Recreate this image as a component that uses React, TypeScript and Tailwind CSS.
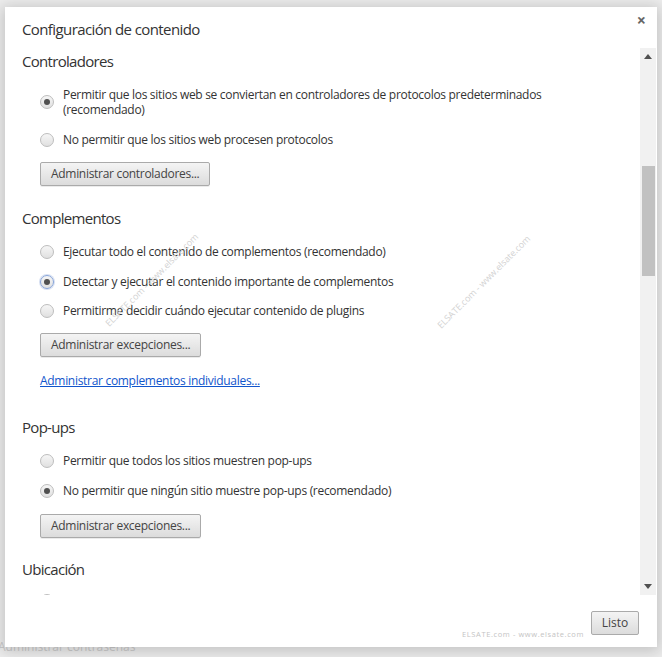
import React from "react";

const font = { fontFamily: '"Open Sans", "Noto Sans", sans-serif' };

function Radio({ checked, focused }: { checked?: boolean; focused?: boolean }) {
  return (
    <span
      className={
        "relative flex h-[14px] w-[14px] shrink-0 items-center justify-center rounded-full border bg-gradient-to-b from-[#f6f6f6] to-[#e0e0e0] " +
        (focused ? "border-[#86a3d8] shadow-[0_0_0_1px_rgba(120,150,210,0.3)]" : "border-[#bdbdbd]")
      }
    >
      {checked && <span className="h-[6px] w-[6px] rounded-full bg-[#505050]" />}
    </span>
  );
}

function Option({
  children,
  checked,
  focused,
  className,
}: {
  children: React.ReactNode;
  checked?: boolean;
  focused?: boolean;
  className?: string;
}) {
  return (
    <div
      className={
        "flex h-[18px] items-center gap-[9px] pl-[18px] text-[12px] leading-[18px] tracking-[-0.3px] text-[#333] " +
        (className ?? "")
      }
    >
      <Radio checked={checked} focused={focused} />
      <span>{children}</span>
    </div>
  );
}

function Btn({ children, className }: { children: React.ReactNode; className?: string }) {
  return (
    <div className={"flex pl-[18px] " + (className ?? "")}>
      <button className="h-[24px] rounded-[2px] border border-[#aaaaaa] bg-gradient-to-b from-[#f4f4f4] to-[#dcdcdc] px-[10px] text-[12px] leading-[22px] tracking-[-0.3px] text-[#444] shadow-[0_1px_0_rgba(0,0,0,0.08)]">
        {children}
      </button>
    </div>
  );
}

function Heading({ children, className }: { children: React.ReactNode; className?: string }) {
  return (
    <h3 className={"h-[20px] text-[15px] leading-[20px] tracking-[-0.7px] text-[#333] " + (className ?? "")}>
      {children}
    </h3>
  );
}

export default function App() {
  return (
    <div className="relative h-[657px] w-[662px] overflow-hidden bg-[#eeeeee]" style={font}>
      {/* settings page behind the overlay */}
      <div className="flex h-full flex-col justify-end pb-[1px] text-[12px] text-[#cbcbcb]">
        <span className="-ml-[2px]">Administrar contraseñas</span>
      </div>

      <div className="absolute left-[5px] top-[7px] flex h-[640px] w-[652px] flex-col bg-white shadow-[0_2px_14px_3px_rgba(0,0,0,0.18)]">
        <div className="flex h-[41px] shrink-0 items-start justify-between pl-[17px] pr-[11px] pt-[12px]">
          <h2 className="text-[15px] leading-[20px] tracking-[-0.6px] text-[#333]">Configuración de contenido</h2>
          <span className="mt-[-9px] text-[16px] font-bold leading-[20px] text-[#666]">×</span>
        </div>

        <div className="flex h-[547px] shrink-0">
          <div className="flex-1 overflow-hidden pl-[17px] pt-[3px]">
            <Heading>Controladores</Heading>
            <div className="mt-[16px] flex items-start gap-[9px] pl-[18px] text-[12px] leading-[15px] tracking-[-0.3px] text-[#333]">
              <span className="mt-[8px]">
                <Radio checked />
              </span>
              <span className="w-[490px]">
                Permitir que los sitios web se conviertan en controladores de protocolos predeterminados (recomendado)
              </span>
            </div>
            <Option className="mt-[14px]">No permitir que los sitios web procesen protocolos</Option>
            <Btn className="mt-[13px]">Administrar controladores...</Btn>

            <Heading className="mt-[22px]">Complementos</Heading>
            <Option className="mt-[15px]">Ejecutar todo el contenido de complementos (recomendado)</Option>
            <Option className="mt-[12px]" checked focused>
              Detectar y ejecutar el contenido importante de complementos
            </Option>
            <Option className="mt-[11px]">Permitirme decidir cuándo ejecutar contenido de plugins</Option>
            <Btn className="mt-[13px]">Administrar excepciones...</Btn>
            <div className="mt-[15px] flex h-[18px] pl-[18px] text-[12px] leading-[18px] tracking-[-0.3px]">
              <a className="text-[#15c] underline">Administrar complementos individuales...</a>
            </div>

            <Heading className="mt-[27px]">Pop-ups</Heading>
            <Option className="mt-[15px]">Permitir que todos los sitios muestren pop-ups</Option>
            <Option className="mt-[12px]" checked>
              No permitir que ningún sitio muestre pop-ups (recomendado)
            </Option>
            <Btn className="mt-[14px]">Administrar excepciones...</Btn>

            <Heading className="mt-[21px]">Ubicación</Heading>
            <Option className="mt-[13px]">Permitir que todos los sitios rastreen mi ubicación física</Option>
          </div>

          {/* scrollbar */}
          <div className="mr-[1px] flex w-[16px] flex-col items-center bg-[#f1f1f1]">
            <div className="flex h-[17px] w-full items-center justify-center">
              <svg width="8" height="5" viewBox="0 0 8 5">
                <path d="M0 5 L4 0 L8 5 Z" fill="#505050" />
              </svg>
            </div>
            <div className="mt-[101px] h-[110px] w-[13px] bg-[#c1c1c1]" />
            <div className="flex-1" />
            <div className="flex h-[17px] w-full items-center justify-center">
              <svg width="8" height="5" viewBox="0 0 8 5">
                <path d="M0 0 L4 5 L8 0 Z" fill="#505050" />
              </svg>
            </div>
          </div>
        </div>

        <div className="flex flex-1 items-start justify-end pr-[18px] pt-[14px]">
          <div className="relative">
            <button className="h-[24px] w-[48px] rounded-[2px] border border-[#aaaaaa] bg-gradient-to-b from-[#f4f4f4] to-[#dcdcdc] text-[12px] leading-[22px] text-[#444]">
              Listo
            </button>
            <span className="absolute right-[55px] top-[20px] whitespace-nowrap text-[7.5px] leading-[10px] tracking-[0.6px] text-[#c4c4c4]">
              ELSATE.com - www.elsate.com
            </span>
          </div>
        </div>
      </div>

      {/* diagonal watermarks */}
      <span className="absolute left-[84px] top-[274px] w-[136px] -rotate-45 whitespace-nowrap text-center text-[9px] leading-[12px] text-[#d2d2d2]">
        ELSATE.com - www.elsate.com
      </span>
      <span className="absolute left-[416px] top-[276px] w-[136px] -rotate-45 whitespace-nowrap text-center text-[9px] leading-[12px] text-[#d2d2d2]">
        ELSATE.com - www.elsate.com
      </span>
    </div>
  );
}
